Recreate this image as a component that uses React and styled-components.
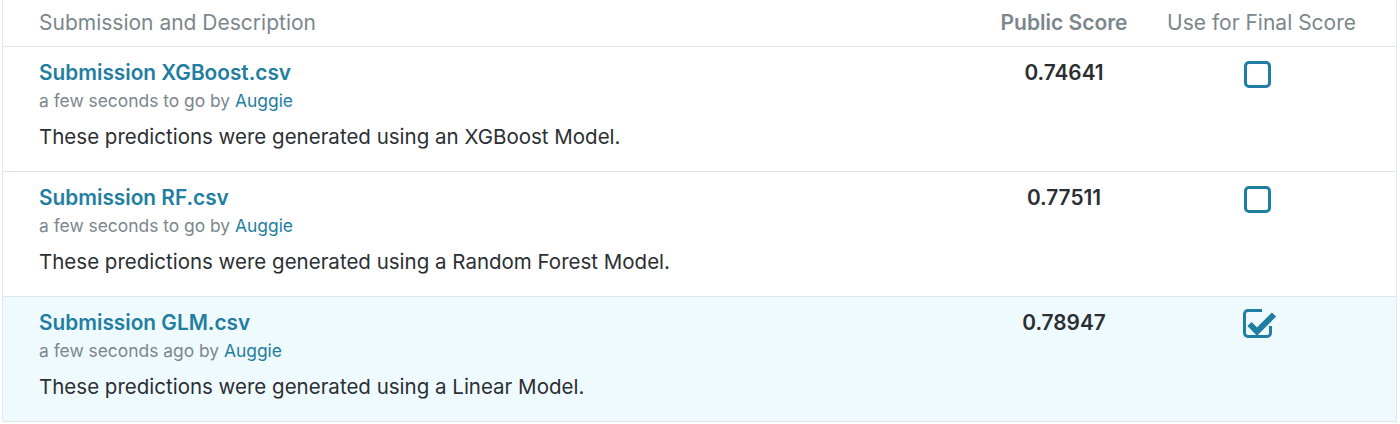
import React from "react";
import styled, { createGlobalStyle } from "styled-components";

const Global = createGlobalStyle`
  html, body { margin: 0; padding: 0; background: #fff; }
  body { font-family: Inter, "Liberation Sans", sans-serif; }
`;

const Table = styled.div`
  margin-left: 2px;
  width: 1395px;
  border-left: 1px solid #e3e8ec;
  border-right: 1px solid #e3e8ec;
  box-sizing: border-box;
`;

const Grid = styled.div`
  display: grid;
  grid-template-columns: 1fr 184px 200px;
  padding-left: 36px;
  padding-right: 40px;
`;

const HeaderRow = styled(Grid)`
  height: 46px;
  align-items: center;
  border-bottom: 1px solid #dfe6ea;
`;

const HeadCell = styled.div`
  font-size: 21px;
  color: #7b878d;
  font-weight: ${(p) => (p.$bold ? 600 : 400)};
  text-align: ${(p) => p.$align || "left"};
  padding-bottom: 2px;
  white-space: nowrap;
`;

const Row = styled(Grid)`
  height: 125px;
  box-sizing: border-box;
  padding-top: 13px;
  border-bottom: 1px solid #dfe6ea;
  background: ${(p) => (p.$selected ? "#effafe" : "#fff")};
`;

const Info = styled.div`
  display: flex;
  flex-direction: column;
`;

const Title = styled.a`
  font-size: 20.8px;
  font-weight: 600;
  color: #1f7ea1;
  text-decoration: none;
  line-height: 26px;
`;

const Meta = styled.div`
  margin-top: 3px;
  font-size: 17.4px;
  color: #7b878d;
  line-height: 24px;
`;

const Author = styled.span`
  color: #1f7ea1;
`;

const Desc = styled.div`
  margin-top: 10px;
  font-size: 20.5px;
  color: #2b2f33;
  line-height: 28px;
`;

const Score = styled.div`
  font-size: 20.8px;
  font-weight: 600;
  color: #2b2f33;
  text-align: center;
  line-height: 26px;
`;

const CheckCell = styled.div`
  display: flex;
  justify-content: flex-start;
  padding-left: 88px;
  padding-top: 1px;
`;

const Box = styled.div`
  width: 27px;
  height: 27px;
  box-sizing: border-box;
  border: 3px solid #1f7ea1;
  border-radius: 5px;
`;

const Checked = () => (
  <svg width="34" height="30" viewBox="0 0 34 30" style={{ marginTop: -2, marginLeft: -1 }}>
    <path
      d="M19 1.5 H5 a3.5 3.5 0 0 0 -3.5 3.5 V24 a3.5 3.5 0 0 0 3.5 3.5 H24 a3.5 3.5 0 0 0 3.5 -3.5 V17"
      fill="none"
      stroke="#1f7ea1"
      strokeWidth="3"
    />
    <polyline
      points="6.5,15 14,22.5 31,5.5"
      fill="none"
      stroke="#1f7ea1"
      strokeWidth="6"
    />
  </svg>
);

const data = [
  {
    name: "Submission XGBoost.csv",
    when: "a few seconds to go by",
    desc: "These predictions were generated using an XGBoost Model.",
    score: "0.74641",
    selected: false,
  },
  {
    name: "Submission RF.csv",
    when: "a few seconds to go by",
    desc: "These predictions were generated using a Random Forest Model.",
    score: "0.77511",
    selected: false,
  },
  {
    name: "Submission GLM.csv",
    when: "a few seconds ago by",
    desc: "These predictions were generated using a Linear Model.",
    score: "0.78947",
    selected: true,
  },
];

export default function App() {
  return (
    <>
      <Global />
      <Table>
        <HeaderRow>
          <HeadCell>Submission and Description</HeadCell>
          <HeadCell $bold $align="center">Public Score</HeadCell>
          <HeadCell $align="right">Use for Final Score</HeadCell>
        </HeaderRow>
        {data.map((d) => (
          <Row key={d.name} $selected={d.selected}>
            <Info>
              <Title href="#">{d.name}</Title>
              <Meta>
                {d.when} <Author>Auggie</Author>
              </Meta>
              <Desc>{d.desc}</Desc>
            </Info>
            <Score>{d.score}</Score>
            <CheckCell>{d.selected ? <Checked /> : <Box />}</CheckCell>
          </Row>
        ))}
      </Table>
    </>
  );
}
